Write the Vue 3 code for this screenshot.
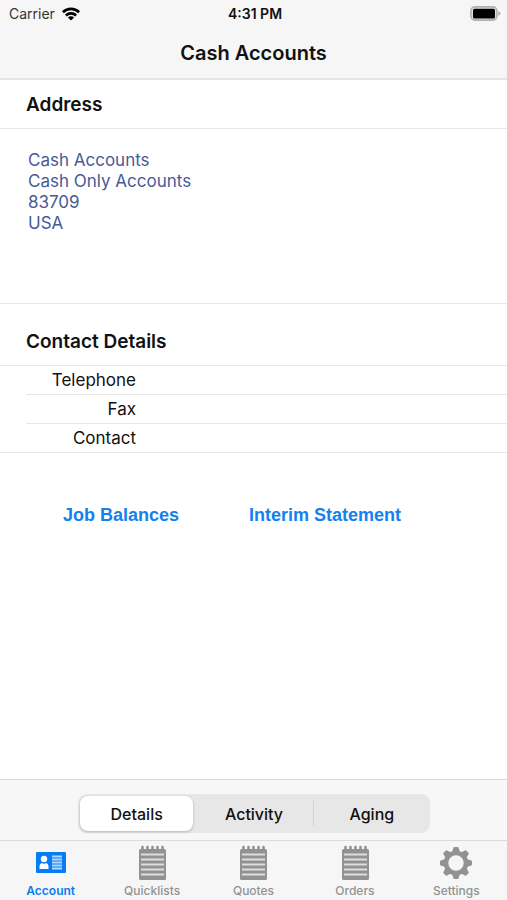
<script setup>
import { ref } from 'vue'

const address = ['Cash Accounts', 'Cash Only Accounts', '83709', 'USA']
const contactFields = ['Telephone', 'Fax', 'Contact']
const segments = ['Details', 'Activity', 'Aging']
const activeSegment = ref('Details')
const tabs = [
  { name: 'Account', icon: 'card' },
  { name: 'Quicklists', icon: 'pad' },
  { name: 'Quotes', icon: 'pad' },
  { name: 'Orders', icon: 'pad' },
  { name: 'Settings', icon: 'gear' },
]
const activeTab = ref('Account')
const teeth = [0, 45, 90, 135, 180, 225, 270, 315]
</script>

<template>
  <div class="screen">
    <header class="top">
      <div class="status">
        <div class="carrier">
          <span>Carrier</span>
          <svg width="18" height="14" viewBox="0 0 18 14" aria-hidden="true">
            <g fill="none" stroke="#000" stroke-width="2.6">
              <path d="M0.9 5.2A11.6 11.6 0 0 1 17.1 5.2" />
              <path d="M3.9 8.5A7.3 7.3 0 0 1 14.1 8.5" />
            </g>
            <path d="M5.9 10.6A4.4 4.4 0 0 1 12.1 10.6L9 13.6Z" />
          </svg>
        </div>
        <span class="time">4:31 PM</span>
        <svg class="battery" width="31" height="15" viewBox="0 0 31 15" aria-hidden="true">
          <rect x="0.9" y="0.9" width="26" height="13.2" rx="4" fill="#e2e2e2" stroke="#b0b0b0" stroke-width="1.6" />
          <rect x="3" y="2.8" width="22" height="9.6" rx="1.5" fill="#000" />
          <path d="M28.3 5.2Q30.4 6 30.4 7.5T28.3 9.8Z" fill="#a9a9a9" />
        </svg>
      </div>
      <h1>Cash Accounts</h1>
    </header>

    <main>
      <section>
        <h2>Address</h2>
        <address>
          <div v-for="line in address" :key="line">{{ line }}</div>
        </address>
      </section>
      <section>
        <h2 class="spaced">Contact Details</h2>
        <dl>
          <div v-for="field in contactFields" :key="field" class="row">
            <dt>{{ field }}</dt>
            <dd></dd>
          </div>
        </dl>
      </section>
      <div class="actions">
        <button type="button">Job Balances</button>
        <button type="button">Interim Statement</button>
      </div>
    </main>

    <div class="toolbar">
      <div class="segmented">
        <button
          v-for="name in segments"
          :key="name"
          type="button"
          :class="{ on: name === activeSegment }"
          :aria-pressed="name === activeSegment"
          @click="activeSegment = name"
        >{{ name }}</button>
      </div>
    </div>

    <nav>
      <button
        v-for="tab in tabs"
        :key="tab.name"
        type="button"
        :class="{ on: tab.name === activeTab }"
        @click="activeTab = tab.name"
      >
        <svg v-if="tab.icon === 'card'" width="34" height="36" viewBox="0 0 34 36" aria-hidden="true">
          <rect x="2" y="7" width="30" height="21" rx="1" fill="currentColor" />
          <circle cx="10" cy="14" r="3.2" fill="#fff" />
          <path d="M5.5 24V21.5Q5.5 18.5 8 18L10 19L12 18Q14.5 18.5 14.5 21.5V24Z" fill="#fff" />
          <path d="M18 11.5H28M18 14.5H28M18 17.5H28M18 20.5H28M18 23.5H28" stroke="#b5d8ff" stroke-width="1.8" />
        </svg>
        <svg v-else-if="tab.icon === 'pad'" width="34" height="36" viewBox="0 0 34 36" aria-hidden="true">
          <rect x="4" y="4" width="27" height="31" rx="1.5" fill="currentColor" />
          <path d="M7.5 5V2M12.5 5V2M17.5 5V2M22.5 5V2M27.5 5V2" stroke="currentColor" stroke-width="2.6" stroke-linecap="round" />
          <path d="M6 9.5H29M6 14.5H29M6 19.5H29M6 24.5H29M6 29.5H29" stroke="#dedede" stroke-width="2" />
        </svg>
        <svg v-else width="34" height="36" viewBox="0 0 34 36" aria-hidden="true">
          <g fill="currentColor">
            <path
              v-for="angle in teeth"
              :key="angle"
              d="M12.5 9L14.4 2.8Q14.6 2 15.4 2H18.6Q19.4 2 19.6 2.8L21.5 9Z"
              :transform="`rotate(${angle} 17 18)`"
            />
          </g>
          <circle cx="17" cy="18" r="10" fill="none" stroke="currentColor" stroke-width="4.6" />
        </svg>
        <span>{{ tab.name }}</span>
      </button>
    </nav>
  </div>
</template>

<style>
body {
  margin: 0;
  background: #fff;
}
</style>

<style scoped>
.screen {
  min-height: 100vh;
  display: flex;
  flex-direction: column;
  font-family: Inter, "Liberation Sans", sans-serif;
  color: #111;
}
button {
  border: 0;
  padding: 0;
  margin: 0;
  background: none;
  font: inherit;
  color: inherit;
  cursor: pointer;
}
.top {
  background: #f6f6f6;
  border-bottom: 2px solid #e5e5e5;
}
.status {
  display: grid;
  grid-template-columns: 1fr auto 1fr;
  align-items: center;
  height: 27px;
  padding: 0 6px 0 9px;
  font-size: 14px;
}
.carrier {
  display: flex;
  align-items: center;
  gap: 7px;
  color: #333;
}
.time {
  font-weight: 600;
}
.battery {
  justify-self: end;
}
h1 {
  margin: 0;
  height: 51px;
  line-height: 52px;
  text-align: center;
  font-size: 20px;
  font-weight: 600;
}
main {
  flex: 1;
}
h2 {
  margin: 0;
  padding: 2px 26px 0;
  font-size: 19px;
  line-height: 46px;
  font-weight: 600;
  border-bottom: 1px solid #e6e6e6;
}
h2.spaced {
  padding-top: 15px;
}
address {
  box-sizing: border-box;
  min-height: 175px;
  padding: 21px 28px;
  border-bottom: 1px solid #e6e6e6;
  font-style: normal;
  font-size: 17px;
  line-height: 21px;
  color: #475b96;
}
dl {
  margin: 0;
  padding-left: 26px;
  font-size: 17px;
  line-height: 28px;
  border-bottom: 1px solid #e6e6e6;
}
.row {
  display: grid;
  grid-template-columns: 110px 1fr;
}
.row + .row {
  border-top: 1px solid #e6e6e6;
}
dt {
  text-align: right;
}
dd {
  margin: 0;
}
.actions {
  display: flex;
  gap: 70px;
  padding: 50px 63px;
  font-family: "Liberation Sans", sans-serif;
  font-size: 18px;
  line-height: 24px;
  font-weight: 700;
  color: #1381ee;
}
.toolbar {
  padding: 14px 77px 7px 78px;
  background: #f7f7f7;
  border-top: 1px solid #dcdcdc;
}
.segmented {
  display: grid;
  grid-template-columns: repeat(3, 1fr);
  height: 39px;
  border-radius: 9px;
  background: #e7e7e7;
  font-size: 16px;
  font-weight: 500;
}
.segmented button {
  margin: 2px;
  border-radius: 8px;
}
.segmented button.on {
  background: #fff;
  box-shadow: 0 1px 3px rgba(0, 0, 0, 0.22);
}
.segmented button:last-child {
  margin: 7px 0;
  border-left: 1px solid #d3d3d3;
  border-radius: 0;
}
nav {
  display: grid;
  grid-template-columns: repeat(5, 1fr);
  height: 59px;
  background: #f6f6f6;
  border-top: 1px solid #dadada;
  font-size: 12px;
  line-height: 14px;
  font-weight: 500;
  color: #929292;
}
nav button {
  display: flex;
  flex-direction: column;
  align-items: center;
  gap: 3px;
  padding-top: 4px;
}
nav button.on {
  color: #087cf5;
  font-weight: 600;
}
</style>
